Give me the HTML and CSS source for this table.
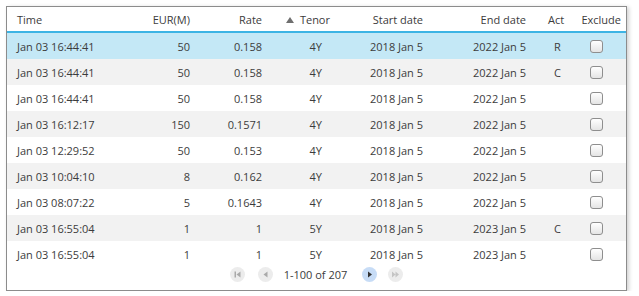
FILE: index.html
```html
<!DOCTYPE html>
<html>
<head>
<meta charset="utf-8">
<link rel="stylesheet" href="styles.css">
</head>
<body>
<div class="panel">
  <table class="grid">
    <colgroup>
      <col class="c-time"><col class="c-eur"><col class="c-rate"><col class="c-tenor">
      <col class="c-start"><col class="c-end"><col class="c-act"><col class="c-excl">
    </colgroup>
    <thead>
      <tr>
        <th class="l">Time</th>
        <th class="r">EUR(M)</th>
        <th class="r">Rate</th>
        <th class="r tenor-h"><span class="sort"></span>Tenor</th>
        <th class="r">Start date</th>
        <th class="r">End date</th>
        <th class="c">Act</th>
        <th class="r excl-h">Exclude</th>
      </tr>
    </thead>
    <tbody>
      <tr class="sel"><td class="l">Jan 03 16:44:41</td><td class="r">50</td><td class="r">0.158</td><td class="r">4Y</td><td class="r">2018 Jan 5</td><td class="r">2022 Jan 5</td><td class="c act">R</td><td class="cb"><span class="box"></span></td></tr>
      <tr><td class="l">Jan 03 16:44:41</td><td class="r">50</td><td class="r">0.158</td><td class="r">4Y</td><td class="r">2018 Jan 5</td><td class="r">2022 Jan 5</td><td class="c act">C</td><td class="cb"><span class="box"></span></td></tr>
      <tr><td class="l">Jan 03 16:44:41</td><td class="r">50</td><td class="r">0.158</td><td class="r">4Y</td><td class="r">2018 Jan 5</td><td class="r">2022 Jan 5</td><td class="c act"></td><td class="cb"><span class="box"></span></td></tr>
      <tr><td class="l">Jan 03 16:12:17</td><td class="r">150</td><td class="r">0.1571</td><td class="r">4Y</td><td class="r">2018 Jan 5</td><td class="r">2022 Jan 5</td><td class="c act"></td><td class="cb"><span class="box"></span></td></tr>
      <tr><td class="l">Jan 03 12:29:52</td><td class="r">50</td><td class="r">0.153</td><td class="r">4Y</td><td class="r">2018 Jan 5</td><td class="r">2022 Jan 5</td><td class="c act"></td><td class="cb"><span class="box"></span></td></tr>
      <tr><td class="l">Jan 03 10:04:10</td><td class="r">8</td><td class="r">0.162</td><td class="r">4Y</td><td class="r">2018 Jan 5</td><td class="r">2022 Jan 5</td><td class="c act"></td><td class="cb"><span class="box"></span></td></tr>
      <tr><td class="l">Jan 03 08:07:22</td><td class="r">5</td><td class="r">0.1643</td><td class="r">4Y</td><td class="r">2018 Jan 5</td><td class="r">2022 Jan 5</td><td class="c act"></td><td class="cb"><span class="box"></span></td></tr>
      <tr><td class="l">Jan 03 16:55:04</td><td class="r">1</td><td class="r">1</td><td class="r">5Y</td><td class="r">2018 Jan 5</td><td class="r">2023 Jan 5</td><td class="c act">C</td><td class="cb"><span class="box"></span></td></tr>
      <tr><td class="l">Jan 03 16:55:04</td><td class="r">1</td><td class="r">1</td><td class="r">5Y</td><td class="r">2018 Jan 5</td><td class="r">2023 Jan 5</td><td class="c act"></td><td class="cb"><span class="box"></span></td></tr>
    </tbody>
  </table>
  <div class="pager">
    <span class="pbtn off first"><svg width="15" height="15" viewBox="0 0 15 15"><rect x="4.5" y="4.5" width="1.5" height="6" fill="#a9a9a9"/><path d="M10.5 4.5 L6.5 7.5 L10.5 10.5 Z" fill="#a9a9a9"/></svg></span>
    <span class="pbtn off prev"><svg width="15" height="15" viewBox="0 0 15 15"><path d="M9.5 4.5 L5.5 7.5 L9.5 10.5 Z" fill="#a9a9a9"/></svg></span>
    <span class="ptext">1-100 of 207</span>
    <span class="pbtn on next"><svg width="15" height="15" viewBox="0 0 15 15"><path d="M6 4.5 L10 7.5 L6 10.5 Z" fill="#333"/></svg></span>
    <span class="pbtn off"><svg width="15" height="15" viewBox="0 0 15 15"><path d="M4 4.5 L7.5 7.5 L4 10.5 Z M7.5 4.5 L11 7.5 L7.5 10.5 Z" fill="#c4c4c4"/></svg></span>
  </div>
</div>
</body>
</html>
```
FILE: styles.css
```css
html, body {
  margin: 0;
  padding: 0;
  background: #ffffff;
}
body {
  font-family: "Open Sans", "Liberation Sans", sans-serif;
  font-size: 11px;
  color: #3c3c3c;
}
.panel {
  box-sizing: border-box;
  width: 621px;
  height: 285px;
  margin: 6px 0 0 6px;
  border: 1px solid #8c8c8c;
  background: #ffffff;
  box-shadow: 2px 1px 4px rgba(0, 0, 0, 0.18);
  display: flex;
  flex-direction: column;
}
.grid {
  width: 619px;
  table-layout: fixed;
  border-collapse: collapse;
}
.c-time { width: 123px; }
.c-eur { width: 68px; }
.c-rate { width: 72px; }
.c-tenor { width: 60px; }
.c-start { width: 101px; }
.c-end { width: 103px; }
.c-act { width: 44px; }
.c-excl { width: 48px; }

.grid th {
  height: 24px;
  padding: 0 8px;
  font-weight: normal;
  color: #3c3c3c;
  border-bottom: 2px solid #3db4e4;
  white-space: nowrap;
}
.grid td {
  height: 26px;
  padding: 0 8px;
  white-space: nowrap;
}
.grid .l { text-align: left; padding-left: 10px; }
.grid .r { text-align: right; }
.grid .c { text-align: center; padding: 0; }
.grid .act { padding-left: 3px; }
.grid th.tenor-h { padding-right: 0; }
.grid th.excl-h { padding-right: 5px; padding-left: 0; }
.sort {
  display: inline-block;
  width: 0;
  height: 0;
  border-left: 4px solid transparent;
  border-right: 4px solid transparent;
  border-bottom: 6px solid #6f6f6f;
  margin-right: 6px;
  vertical-align: 1px;
}
.grid tbody tr:nth-child(even) { background: #f2f2f2; }
.grid tbody tr.sel { background: #c4e8f6; }
.grid td.cb {
  padding: 0 0 0 12px;
  line-height: 0;
}
.box {
  display: inline-block;
  box-sizing: border-box;
  width: 13px;
  height: 13px;
  border: 1px solid #8e8e8e;
  border-radius: 3px;
  background: linear-gradient(#ffffff, #e4e4e4);
  vertical-align: middle;
}
.pager {
  display: flex;
  align-items: center;
  justify-content: center;
  margin-top: -1px;
  height: 16px;
}
.pbtn {
  width: 15px;
  height: 15px;
  border-radius: 50%;
  display: inline-flex;
  line-height: 0;
}
.pbtn.off { background: #ececec; }
.pbtn.on { background: #c7dcf6; }
.first { margin-right: 13px; }
.prev { margin-right: 11px; }
.next { margin-right: 11px; }
.ptext {
  margin-right: 15px;
  color: #3c3c3c;
}
```
